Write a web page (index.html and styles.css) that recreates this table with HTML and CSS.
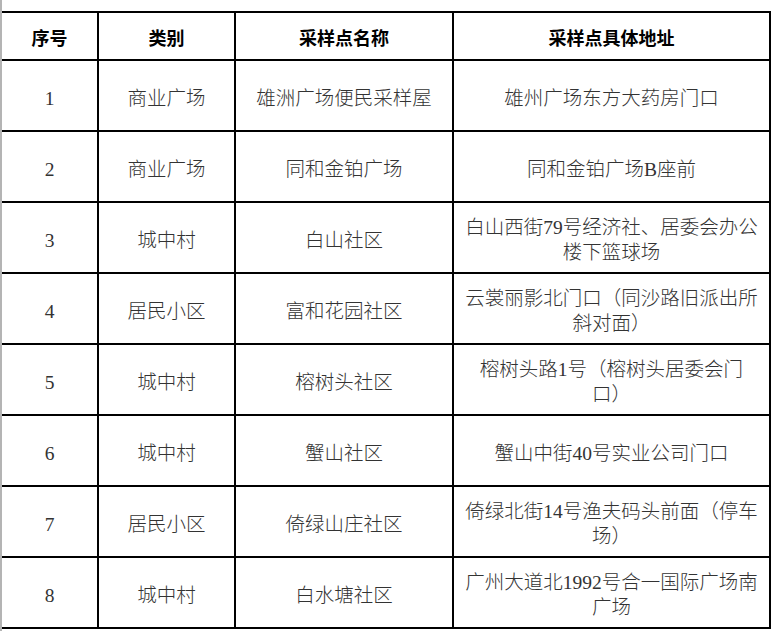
FILE: index.html
```html
<!DOCTYPE html>
<html lang="zh-CN">
<head>
<meta charset="utf-8">
<title>采样点</title>
<link rel="stylesheet" href="styles.css">
</head>
<body>
<div class="page">
  <table class="sites">
    <colgroup>
      <col class="c-no">
      <col class="c-type">
      <col class="c-name">
      <col class="c-addr">
    </colgroup>
    <thead>
      <tr class="head">
        <th>序号</th>
        <th>类别</th>
        <th>采样点名称</th>
        <th>采样点具体地址</th>
      </tr>
    </thead>
    <tbody>
      <tr><td>1</td><td>商业广场</td><td>雄洲广场便民采样屋</td><td class="addr">雄州广场东方大药房门口</td></tr>
      <tr><td>2</td><td>商业广场</td><td>同和金铂广场</td><td class="addr">同和金铂广场B座前</td></tr>
      <tr><td>3</td><td>城中村</td><td>白山社区</td><td class="addr">白山西街79号经济社、居委会办公楼下篮球场</td></tr>
      <tr><td>4</td><td>居民小区</td><td>富和花园社区</td><td class="addr">云裳丽影北门口（同沙路旧派出所斜对面）</td></tr>
      <tr><td>5</td><td>城中村</td><td>榕树头社区</td><td class="addr">榕树头路1号（榕树头居委会门口）</td></tr>
      <tr><td>6</td><td>城中村</td><td>蟹山社区</td><td class="addr">蟹山中街40号实业公司门口</td></tr>
      <tr><td>7</td><td>居民小区</td><td>倚绿山庄社区</td><td class="addr">倚绿北街14号渔夫码头前面（停车场）</td></tr>
      <tr><td>8</td><td>城中村</td><td>白水塘社区</td><td class="addr">广州大道北1992号合一国际广场南广场</td></tr>
    </tbody>
  </table>
</div>
</body>
</html>
```
FILE: styles.css
```css
html, body {
  margin: 0;
  padding: 0;
  background: #fff;
}
.page {
  box-sizing: border-box;
  width: 772px;
  height: 631px;
  overflow: hidden;
  padding-top: 11px;
  border-left: 2px solid #b4b4b4;
}
.sites {
  border-collapse: collapse;
  table-layout: fixed;
  width: 768px;
}
.c-no { width: 96px; }
.c-type { width: 137px; }
.c-name { width: 218px; }
.c-addr { width: 317px; }
.sites th,
.sites td {
  border: 2px solid #000;
  padding: 0 8px;
  text-align: center;
  vertical-align: middle;
}
.sites tr > :first-child {
  border-left: none;
}
.head {
  height: 48px;
}
.head th {
  font-family: "Noto Sans CJK SC", sans-serif;
  font-weight: 700;
  font-size: 18px;
  color: #000;
  padding-top: 2px;
}
.sites tbody tr {
  height: 71px;
}
.sites td {
  font-family: "Liberation Serif", "Noto Sans CJK SC", serif;
  font-weight: 300;
  font-size: 19.5px;
  line-height: 25px;
  color: #333;
  padding-top: 5px;
  text-spacing-trim: space-all;
}
.sites td.addr {
  padding-left: 9px;
  padding-right: 9px;
}
```
